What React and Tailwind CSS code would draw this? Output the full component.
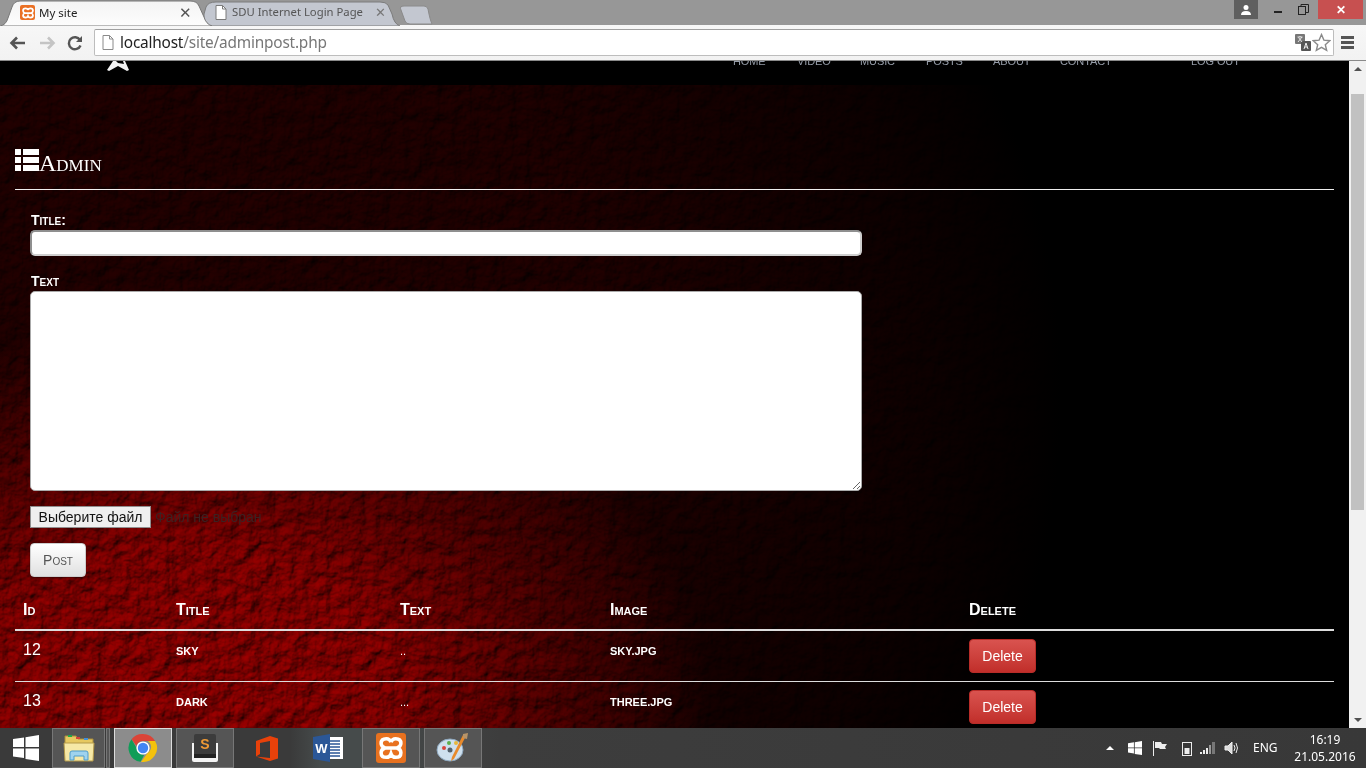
const XamppGlyph = ({ size = 14 }) => (
  <svg width={size} height={size} viewBox="0 0 24 24" fill="none" stroke="#fff" strokeWidth="3">
    <path d="M12 7Q11 4 8 4Q3.500 4 3.500 8Q3.500 11 7 12Q3.500 13 3.500 16Q3.500 20 8 20Q11 20 12 17Q13 20 16 20Q20.500 20 20.500 16Q20.500 13 17 12Q20.500 11 20.500 8Q20.500 4 16 4Q13 4 12 7M7 12H17" />
  </svg>
);

const TabShapes = () => (
  <svg className="absolute left-0 top-0" width="440" height="26">
    <defs>
      <linearGradient id="tabActive" x1="0" y1="0" x2="0" y2="1">
        <stop offset="0" stopColor="#f4f4f4" />
        <stop offset="1" stopColor="#fdfdfd" />
      </linearGradient>
    </defs>
    <path d="M420 24 L432 24 Q430 20 428 9 Q427 6 424 6 L404 6 Q399 6 401 10 L405 21 Q406 24 410 24Z" fill="#c3c7d0" stroke="#8a8a8a" />
    <path d="M204 26 L400 26 Q394 24 392 14 L388 5 Q386 2 380 2 L216 2 Q208 2 206 7 L204 14Z" fill="#c3c7d0" stroke="#7c7c7c" />
    <path d="M0 26 Q6 25 8 18 L12 7 Q14 1 20 1 L190 1 Q197 1 199 6 L204 17 Q206 24 212 26Z" fill="url(#tabActive)" stroke="#777" />
  </svg>
);

const PageIcon = ({ color = "#7a7a7a" }) => (
  <svg width="12" height="15" viewBox="0 0 12 15" fill="#fff" stroke={color}>
    <path d="M1 .5h6.500L11 4v10.500H1z" />
    <path d="M7.500 .5V4H11" fill="none" />
  </svg>
);

const ChromeLogo = () => (
  <svg width="30" height="30" viewBox="0 0 30 30">
    <path d="M15 1a14 14 0 0 1 12.100 7H15a7 7 0 0 0-6.600 4.700L3.500 6.300A14 14 0 0 1 15 1z" fill="#db4437" />
    <path d="M3.500 6.300 9.700 17a6.500 6.500 0 0 0 6.500 4.800L12.600 28.800A14 14 0 0 1 3.500 6.300z" fill="#0f9d58" />
    <path d="M27.100 8A14 14 0 0 1 13 28.900L19.500 20a7 7 0 0 0 .4-12z" fill="#f4c20d" />
    <circle cx="15" cy="15" r="6.600" fill="#fff" />
    <circle cx="15" cy="15" r="5.200" fill="#4285f4" />
  </svg>
);

const Folder = () => (
  <svg width="32" height="30" viewBox="0 0 32 30">
    <path d="M2 3h11l2 3h15v8H2z" fill="#e6c860" stroke="#a98d3c" />
    <rect x="5" y="2" width="4" height="2" fill="#21a84a" />
    <rect x="13" y="4" width="4" height="2" fill="#d4453a" />
    <rect x="21" y="5" width="4" height="2" fill="#3f8fdc" />
    <path d="M1 10h30l-1 18H2z" fill="#f6e8a6" stroke="#b49a4a" />
    <path d="M7 27v-7q0-2 2-2h14q2 0 2 2v7h-4v-4H11v4z" fill="#9fd3ee" stroke="#4d9ccb" />
  </svg>
);

const Sublime = () => (
  <svg width="32" height="30" viewBox="0 0 32 30">
    <path d="M3 10h26v17q0 2-2 2H5q-2 0-2-2z" fill="#f4f4f4" />
    <rect x="5" y="1" width="22" height="24" rx="2" fill="#3c3c3c" />
    <rect x="5" y="21" width="22" height="4" fill="#222" />
    <text x="16" y="16" textAnchor="middle" fontSize="14" fontWeight="700" fill="#f09a35" fontFamily="'Liberation Sans', sans-serif">S</text>
  </svg>
);

const Office = () => (
  <svg width="24" height="25" viewBox="0 0 24 25">
    <path d="M1 5 15 0l8 2.500v20L15 25 1 20.500l14 1.500V5L5 7v11l-4 2.500z" fill="#e8410a" />
  </svg>
);

const Word = () => (
  <svg width="30" height="28" viewBox="0 0 30 28">
    <rect x="14" y="3" width="16" height="22" fill="#fff" />
    <path d="M17 7h10M17 10h10M17 13h10M17 16h10M17 19h10M17 22h10" stroke="#2b5797" strokeWidth="1.500" />
    <path d="M0 3 17 0v28L0 25z" fill="#2b5797" />
    <text x="8.500" y="19" textAnchor="middle" fontSize="13" fontWeight="700" fill="#fff" fontFamily="'Liberation Sans', sans-serif">W</text>
  </svg>
);

const Palette = () => (
  <svg width="34" height="30" viewBox="0 0 34 30">
    <ellipse cx="14" cy="17" rx="13" ry="11" fill="#cfe0ee" stroke="#8ea8bf" />
    <circle cx="8" cy="15" r="2" fill="#d8453c" />
    <circle cx="13" cy="10" r="2" fill="#5eae4c" />
    <circle cx="20" cy="10" r="2" fill="#e7b63c" />
    <circle cx="14" cy="17" r="2.500" fill="#53606b" />
    <path d="M30 3 18 26l-3 2 1-4L27 2z" fill="#e88a2c" />
    <path d="M27 1l5-1-1 6-4-1z" fill="#b89468" />
  </svg>
);

const TaskButton = ({ className, children }) => (
  <div className={`flex h-[40px] items-center justify-center ${className}`}>{children}</div>
);

// rock texture, multiplied over the red glow
const PageBackground = () => (
  <svg className="absolute inset-0 h-full w-full mix-blend-multiply" xmlns="http://www.w3.org/2000/svg">
    <filter id="rock" x="0" y="0" width="100%" height="100%" colorInterpolationFilters="sRGB">
      <feTurbulence type="fractalNoise" baseFrequency="0.07" numOctaves="6" seed="23" />
      <feDiffuseLighting surfaceScale="2.500" diffuseConstant="1" lightingColor="#fff">
        <feDistantLight azimuth="235" elevation="58" />
      </feDiffuseLighting>
      <feColorMatrix values="1.500 0 0 0 -0.500  1.500 0 0 0 -0.500  1.500 0 0 0 -0.500  0 0 0 0 1" />
    </filter>
    <rect width="100%" height="100%" filter="url(#rock)" />
  </svg>
);

const rows = [
  { id: "12", title: "sky", text: "..", image: "sky.jpg" },
  { id: "13", title: "dark", text: "...", image: "three.jpg" },
];

const headers = ["Id", "Title", "Text", "Image", "Delete"];

const navItems = [
  { label: "HOME", width: "w-[64px]" },
  { label: "VIDEO", width: "w-[63px]" },
  { label: "MUSIC", width: "w-[66px]" },
  { label: "POSTS", width: "w-[67px]" },
  { label: "ABOUT", width: "w-[67px]" },
  { label: "CONTACT", width: "w-[131px]" },
  { label: "LOG OUT", width: "w-[70px]" },
];

export default function App() {
  return (
    <div className="flex h-[768px] w-[1366px] flex-col overflow-hidden bg-black font-['Liberation_Sans',sans-serif]">
      {/* tab strip */}
      <div className="relative flex h-[25px] shrink-0 bg-[#979797]">
        <TabShapes />
        <div className="relative flex h-[25px] w-[205px] items-center pl-[20px] pr-[13px] font-['Noto_Sans',sans-serif] text-[11.500px] text-[#222]">
          <span className="flex h-[15px] w-[15px] items-center justify-center rounded-[2px] bg-[#ea7024]">
            <XamppGlyph size={14} />
          </span>
          <span className="ml-[4px] flex-1 whitespace-nowrap">My site</span>
          <span className="text-[15px] leading-none text-[#555]">✕</span>
        </div>
        <div className="relative flex h-[25px] w-[193px] items-center pl-[10px] pr-[12px] font-['Noto_Sans',sans-serif] text-[11.300px] text-[#555]">
          <PageIcon />
          <span className="ml-[5px] flex-1 whitespace-nowrap">SDU Internet Login Page</span>
          <span className="text-[13px] leading-none text-[#777]">✕</span>
        </div>
        <div className="flex-1" />
        <div className="relative mr-[7px] flex h-[19px] w-[24px] items-center justify-center bg-[#5f5f5f]">
          <svg width="12" height="12" viewBox="0 0 12 12" fill="#fff">
            <circle cx="6" cy="3.500" r="2.500" />
            <path d="M1 11q0-4 5-4t5 4z" />
          </svg>
        </div>
        <div className="flex h-[19px] w-[26px] items-center justify-center">
          <span className="mt-[4px] block h-[2px] w-[8px] bg-[#222]" />
        </div>
        <svg className="ml-[7px] mr-[9px] mt-[4px]" width="11" height="11" viewBox="0 0 11 11" fill="none" stroke="#222">
          <rect x=".5" y="2.500" width="7" height="8" />
          <path d="M3 2.500V.5h7.500v8H8" />
        </svg>
        <div className="flex h-[19px] w-[45px] items-center justify-center bg-[#c75050] text-[12px] font-bold text-white">✕</div>
        <div className="w-[3px]" />
      </div>

      {/* toolbar */}
      <div className="flex h-[36px] shrink-0 items-center border-b border-[#8a8a8a] bg-gradient-to-b from-[#f7f7f7] to-[#f2f2f2] pl-[9px]">
        <svg width="18" height="14" viewBox="0 0 18 14" fill="none" stroke="#555" strokeWidth="2.600">
          <path d="M16 7H3M8 1.500 2.500 7 8 12.500" />
        </svg>
        <svg className="ml-[11px]" width="18" height="14" viewBox="0 0 18 14" fill="none" stroke="#c4c4c4" strokeWidth="2.600">
          <path d="M2 7h13M10 1.500 15.500 7 10 12.500" />
        </svg>
        <svg className="ml-[11px]" width="16" height="16" viewBox="0 0 16 16" fill="none" stroke="#555" strokeWidth="2.400">
          <path d="M13.500 10.500A6 6 0 1 1 13 5" />
          <path d="M15 1v6H9z" fill="#555" stroke="none" />
        </svg>
        <div className="ml-[11px] flex h-[27px] w-[1240px] items-center rounded-[2px] border border-[#bdbdbd] border-t-[#a0a0a0] bg-white pl-[7px] pr-[2px]">
          <PageIcon color="#8a8a8a" />
          <span className="ml-[6px] flex-1 font-['Noto_Sans',sans-serif] text-[15.400px] tracking-[-0.2px] text-[#777]">
            <span className="text-[#222]">localhost</span>/site/adminpost.php
          </span>
          <svg width="16" height="17" viewBox="0 0 16 17">
            <rect x="0" y="0" width="10" height="10" rx="1" fill="#777" />
            <rect x="6" y="7" width="10" height="10" rx="1" fill="#555" />
            <path d="M2.500 3h5M5 2v1M3 8l4-5M3.500 3.500 7 8" stroke="#fff" fill="none" strokeWidth=".8" />
            <path d="M9 15l2-6 2 6M9.800 13h2.400" stroke="#fff" fill="none" strokeWidth=".9" />
          </svg>
          <svg className="ml-[1px]" width="19" height="19" viewBox="0 0 24 24" fill="#fff" stroke="#8a8a8a" strokeWidth="1.800">
            <path d="m12 2 3 7 7.500.7-5.700 5 1.700 7.300L12 18.200 5.500 22l1.700-7.300-5.700-5L9 9z" />
          </svg>
        </div>
        <div className="ml-[7px] flex w-[13px] flex-col gap-[2px]">
          <span className="block h-[3px] bg-[#555]" />
          <span className="block h-[3px] bg-[#555]" />
          <span className="block h-[3px] bg-[#555]" />
        </div>
      </div>

      {/* page */}
      <div className="flex min-h-0 flex-1">
        <div className="relative min-w-0 flex-1 overflow-hidden bg-[radial-gradient(ellipse_520px_380px_at_14%_96%,#a00000_0%,#980000_40%,#560000_72%,transparent_100%),radial-gradient(ellipse_900px_820px_at_12%_50%,#260000_0%,#220000_50%,#0e0000_85%,#000_100%)]">
          <PageBackground />
          <div className="relative">
            <div className="flex h-[24px] items-start overflow-hidden bg-black">
              <svg className="ml-[105px] shrink-0" width="28" height="14" viewBox="0 0 28 14" fill="#f2f2f2">
                <path d="M8 0 2 9l2 1 9-5 9 5 2-1-4-9h-2l1 3-6-1-2-2z" />
              </svg>
              <nav className="ml-[600px] mt-[-5px] flex shrink-0 text-[11px] leading-none tracking-[-0.1px] text-[#959ca8]">
                {navItems.map((n) => (
                  <span key={n.label} className={`${n.width} whitespace-nowrap`}>{n.label}</span>
                ))}
              </nav>
            </div>

            <div className="px-[15px] pt-[64px]">
              <div className="flex h-[41px] items-start border-b border-[#eee]">
                <svg width="24" height="22" viewBox="0 0 24 22" fill="#fff">
                  <rect x="0" y="0" width="6" height="6" />
                  <rect x="8" y="0" width="16" height="6" />
                  <rect x="0" y="8" width="6" height="6" />
                  <rect x="8" y="8" width="16" height="6" />
                  <rect x="0" y="16" width="6" height="6" />
                  <rect x="8" y="16" width="16" height="6" />
                </svg>
                <h1 className="ml-[0px] font-['Liberation_Serif',serif] text-[24px] leading-[28px] text-white [font-variant:small-caps]">Admin</h1>
              </div>

              <div className="w-[847px] pl-[15px] pt-[21px]">
                <label className="block pl-[1px] text-[14px] font-bold leading-[18px] text-white [font-variant:small-caps]">Title:</label>
                <div className="mt-[1px] h-[26px] rounded-[5px] border-2 border-[#cfcfcf] border-t-[#8f8f8f] border-l-[#8f8f8f] bg-white" />
                <label className="mt-[16px] block pl-[1px] text-[14px] font-bold leading-[18px] text-white [font-variant:small-caps]">Text</label>
                <div className="relative mt-[1px] h-[200px] rounded-[5px] border border-[#aaa] bg-white">
                  <svg className="absolute bottom-[1px] right-[1px]" width="8" height="8" viewBox="0 0 8 8" stroke="#666" fill="none">
                    <path d="M1 8 8 1M5 8l3-3" />
                  </svg>
                </div>
                <div className="mt-[15px] flex h-[22px] items-center text-[14px]">
                  <span className="flex h-[22px] w-[121px] items-center justify-center border border-[#8f8f8f] bg-[#efefef] text-[#111]">Выберите файл</span>
                  <span className="ml-[4px] text-[#3c2222]">Файл не выбран</span>
                </div>
                <button className="mt-[15px] block h-[34px] w-[56px] rounded-[4px] border border-[#ccc] bg-gradient-to-b from-white to-[#e0e0e0] text-[14px] text-[#555] shadow-[0_1px_2px_rgba(0,0,0,0.5)] [font-variant:small-caps]">Post</button>
              </div>

              <table className="mt-[15px] w-full table-fixed border-collapse text-white">
                <colgroup>
                  <col className="w-[153px]" />
                  <col className="w-[224px]" />
                  <col className="w-[210px]" />
                  <col className="w-[359px]" />
                  <col />
                </colgroup>
                <thead>
                  <tr className="border-b-2 border-[#ddd]">
                    {headers.map((h) => (
                      <th key={h} className="h-[38px] px-[8px] pb-[2px] text-left text-[16px] font-bold leading-[20px] [font-variant:small-caps]">{h}</th>
                    ))}
                  </tr>
                </thead>
                <tbody>
                  {rows.map((r) => (
                    <tr key={r.id} className="border-b border-[#ddd]">
                      <td className="h-[51px] px-[8px] pb-[11px] text-[16px]">{r.id}</td>
                      <td className="px-[8px] pb-[9px] text-[11px] font-bold uppercase">{r.title}</td>
                      <td className="px-[8px] pb-[9px] text-[11px]">{r.text}</td>
                      <td className="px-[8px] pb-[9px] text-[11px] font-bold uppercase">{r.image}</td>
                      <td className="px-[8px]">
                        <button className="h-[34px] w-[67px] rounded-[4px] border border-[#b92c28] bg-gradient-to-b from-[#d9534f] to-[#c12e2a] pt-[2px] text-[14px] text-white">Delete</button>
                      </td>
                    </tr>
                  ))}
                </tbody>
              </table>
            </div>
          </div>
        </div>

        {/* scrollbar */}
        <div className="flex w-[17px] shrink-0 flex-col items-center bg-[#f1f1f1]">
          <span className="mt-[6px] h-0 w-0 border-x-[4px] border-b-[4px] border-x-transparent border-b-[#505050]" />
          <span className="mt-[23px] h-[416px] w-[13px] bg-[#c1c1c1]" />
          <span className="mt-auto mb-[6px] h-0 w-0 border-x-[4px] border-t-[4px] border-x-transparent border-t-[#505050]" />
        </div>
      </div>

      {/* taskbar */}
      <div className="flex h-[40px] shrink-0 items-center bg-[linear-gradient(90deg,#3a3a3a_0,#3a3a3a_290px,#464b4b_320px,#464b4b_360px,#3d3d3d_500px,#383838_100%)] text-white">
        <div className="flex w-[52px] items-center justify-center">
          <svg width="26" height="26" viewBox="0 0 26 26" fill="#fff">
            <path d="M0 4l11-1.500V12H0zM12.500 2.300 26 0v12H12.500zM0 13.500h11V23L0 21.500zM12.500 13.500H26V26l-13.500-2z" />
          </svg>
        </div>
        <TaskButton className="w-[53px] border border-[#777] bg-[#555]"><Folder /></TaskButton>
        <span className="ml-[1px] h-[40px] w-[4px] border border-[#777] bg-[#555]" />
        <TaskButton className="ml-[4px] w-[58px] border border-[#ddd] bg-[#8c8c8c]"><ChromeLogo /></TaskButton>
        <TaskButton className="ml-[4px] w-[58px] border border-[#777] bg-[#555]"><Sublime /></TaskButton>
        <TaskButton className="ml-[20px] w-[25px]"><Office /></TaskButton>
        <TaskButton className="ml-[34px] w-[30px]"><Word /></TaskButton>
        <TaskButton className="ml-[19px] w-[58px] border border-[#777] bg-[#555]">
          <span className="flex h-[30px] w-[30px] items-center justify-center rounded-[3px] bg-[#e8711f]">
            <XamppGlyph size={28} />
          </span>
        </TaskButton>
        <TaskButton className="ml-[4px] w-[58px] border border-[#777] bg-[#555]"><Palette /></TaskButton>

        <div className="flex-1" />
        <span className="mr-[14px] h-0 w-0 border-x-[4px] border-b-[4px] border-x-transparent border-b-white" />
        <svg className="mr-[10px]" width="14" height="14" viewBox="0 0 26 26" fill="#fff">
          <path d="M0 4l11-1.500V12H0zM12.500 2.300 26 0v12H12.500zM0 13.500h11V23L0 21.500zM12.500 13.500H26V26l-13.500-2z" />
        </svg>
        <svg className="mr-[15px]" width="15" height="15" viewBox="0 0 15 15" fill="#eee">
          <path d="M1 0h1v15H1zM3 1h6l1 2h5l-2 3 1 2H8L7 7H3z" />
        </svg>
        <svg className="mr-[8px]" width="10" height="15" viewBox="0 0 10 15" fill="none" stroke="#eee">
          <rect x=".5" y="1.500" width="9" height="13" />
          <rect x="2.500" y="7" width="5" height="6" fill="#eee" stroke="none" />
        </svg>
        <svg className="mr-[8px]" width="16" height="12" viewBox="0 0 16 12" fill="#eee">
          <rect x="0" y="10" width="2" height="2" />
          <rect x="3" y="8" width="2" height="4" />
          <rect x="6" y="6" width="2" height="6" />
          <rect x="9" y="3" width="2" height="9" fill="#999" />
          <rect x="12" y="0" width="3" height="12" fill="#777" />
        </svg>
        <svg className="mr-[14px]" width="15" height="14" viewBox="0 0 15 14" fill="none" stroke="#eee">
          <path d="M1 5h3l4-4v12L4 9H1z" fill="#ddd" />
          <path d="M10 4q2 3 0 6M12 2q3 5 0 10" />
        </svg>
        <span className="w-[28px] font-['Noto_Sans',sans-serif] text-[12px]">ENG</span>
        <div className="ml-[13px] mr-[10px] w-[62px] text-center font-['Noto_Sans',sans-serif] text-[12px] leading-[17px]">
          <div>16:19</div>
          <div>21.05.2016</div>
        </div>
      </div>
    </div>
  );
}
